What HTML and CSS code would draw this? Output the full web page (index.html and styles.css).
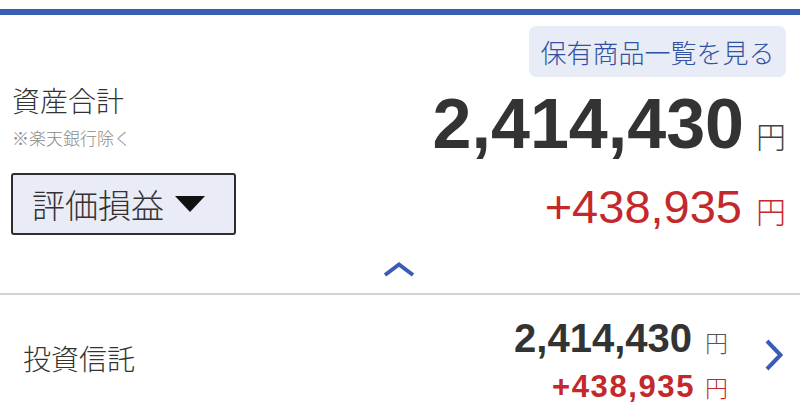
FILE: index.html
```html
<!DOCTYPE html>
<html lang="ja">
<head>
<meta charset="utf-8">
<title>資産合計</title>
<link rel="stylesheet" href="styles.css">
</head>
<body>
<div class="topbar"></div>
<section class="summary">
  <div class="link-row"><a class="holdings-btn">保有商品一覧を見る</a></div>
  <div class="total-row">
    <div class="total-label">
      <div class="label">資産合計</div>
      <div class="note">※楽天銀行除く</div>
    </div>
    <div class="total-amount"><span class="num">2,414,430</span><span class="yen">円</span></div>
  </div>
  <div class="pl-row">
    <div class="select"><span>評価損益</span><svg class="tri" width="30" height="16" viewBox="0 0 30 16"><polygon points="0,0 30,0 15,16" fill="#111"/></svg></div>
    <div class="pl-amount"><span class="num">+438,935</span><span class="yen">円</span></div>
  </div>
  <div class="collapse"><svg width="32" height="15" viewBox="0 0 32 15"><polyline points="2,13 16,2.5 30,13" fill="none" stroke="#3a5cb8" stroke-width="4"/></svg></div>
</section>
<div class="divider"></div>
<div class="fund-row">
  <div class="fund-name">投資信託</div>
  <div class="fund-amounts">
    <div class="fund-total"><span class="num">2,414,430</span><span class="yen">円</span></div>
    <div class="fund-pl"><span class="num">+438,935</span><span class="yen">円</span></div>
  </div>
  <svg class="chev" width="18" height="32" viewBox="0 0 18 32"><polyline points="2,2 15.5,16 2,30" fill="none" stroke="#3a5cb8" stroke-width="4"/></svg>
</div>
</body>
</html>
```
FILE: styles.css
```css
html, body {
  margin: 0;
  padding: 0;
  background: #fff;
}
body {
  width: 800px;
  height: 419px;
  overflow: hidden;
  font-family: "Noto Sans CJK JP", "Noto Sans", sans-serif;
  font-weight: 300;
  color: #333;
}
.topbar {
  margin-top: 9px;
  height: 6px;
  background: #3a5db4;
}
.summary {
  padding: 0 14px 0 11px;
}
.link-row {
  display: flex;
  justify-content: flex-end;
  padding-top: 11px;
}
.holdings-btn {
  display: block;
  box-sizing: border-box;
  width: 257px;
  height: 51px;
  background: #e8ecf6;
  border-radius: 7px;
  color: #3152a3;
  font-size: 26px;
  line-height: 51px;
  text-align: center;
}
.total-row {
  display: flex;
  justify-content: space-between;
  align-items: flex-start;
  height: 96px;
}
.label {
  font-size: 28px;
  line-height: 28px;
  margin-top: 9px;
  padding-left: 1px;
  color: #333;
}
.note {
  font-size: 17px;
  line-height: 17px;
  margin-top: 15px;
  padding-left: 1px;
  color: #8a8a8a;
}
.total-amount {
  display: flex;
  align-items: baseline;
  margin-top: 12px;
}
.total-amount .num {
  font: 700 70px/70px "Liberation Sans", Arial, sans-serif;
  color: #333;
}
.total-amount .yen {
  font-size: 30px;
  line-height: 1;
  margin-left: 12px;
  color: #444;
}
.pl-row {
  display: flex;
  justify-content: space-between;
  align-items: flex-start;
}
.select {
  box-sizing: border-box;
  width: 225px;
  height: 62px;
  border: 2px solid #2e2e2e;
  border-radius: 3px;
  background: #e9ecf6;
  display: flex;
  align-items: center;
  gap: 11px;
  padding-left: 19px;
  font-size: 33px;
  line-height: 1;
  color: #333;
}
.pl-amount {
  display: flex;
  align-items: baseline;
  margin-top: 11px;
  color: #c4282b;
}
.pl-amount .num {
  font: 400 47px/46px "Liberation Sans", Arial, sans-serif;
}
.pl-amount .yen {
  font-size: 30px;
  line-height: 1;
  margin-left: 14px;
}
.collapse {
  display: flex;
  justify-content: center;
  margin-top: 27px;
  padding-bottom: 16px;
}
.collapse svg {
  display: block;
}
.divider {
  height: 2px;
  background: #d2d2d2;
}
.fund-row {
  display: flex;
  align-items: flex-start;
  padding: 0 17px 0 23px;
  height: 124px;
}
.fund-name {
  font-size: 28px;
  line-height: 28px;
  margin-top: 49px;
  color: #333;
}
.fund-amounts {
  margin-left: auto;
  margin-top: 23px;
  display: flex;
  flex-direction: column;
  align-items: flex-end;
}
.fund-total, .fund-pl {
  display: flex;
  align-items: baseline;
}
.fund-total .num {
  font: 700 40px/40px "Liberation Sans", Arial, sans-serif;
  color: #333;
}
.fund-total .yen {
  font-size: 23px;
  line-height: 1;
  margin-left: 13px;
  color: #555;
}
.fund-pl {
  margin-top: 14px;
  color: #c4282b;
}
.fund-pl .num {
  font: 700 31px/30px "Liberation Sans", Arial, sans-serif;
  letter-spacing: 1.6px;
}
.fund-pl .yen {
  font-size: 23px;
  line-height: 1;
  margin-left: 10px;
}
.chev {
  display: block;
  margin-left: 37px;
  margin-top: 44px;
}
```
